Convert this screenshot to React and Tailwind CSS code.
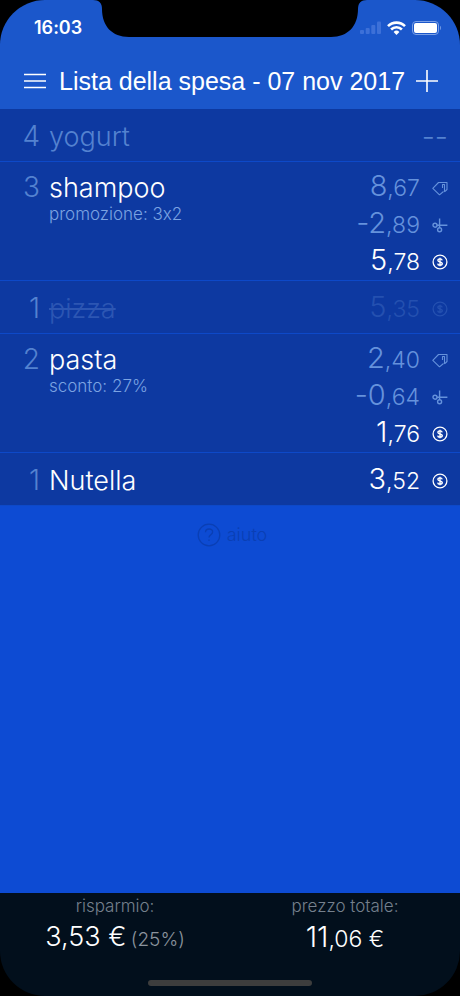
import React from 'react';
import clsx from 'clsx';

const items = [
  { id: 1, qty: 4, name: 'yogurt', status: 'pending', prices: [] },
  {
    id: 2,
    qty: 3,
    name: 'shampoo',
    note: 'promozione: 3x2',
    status: 'priced',
    prices: [
      { type: 'list', whole: '8', cents: '67' },
      { type: 'discount', whole: '-2', cents: '89' },
      { type: 'final', whole: '5', cents: '78' },
    ],
  },
  {
    id: 3,
    qty: 1,
    name: 'pizza',
    status: 'removed',
    prices: [{ type: 'final', whole: '5', cents: '35' }],
  },
  {
    id: 4,
    qty: 2,
    name: 'pasta',
    note: 'sconto: 27%',
    status: 'priced',
    prices: [
      { type: 'list', whole: '2', cents: '40' },
      { type: 'discount', whole: '-0', cents: '64' },
      { type: 'final', whole: '1', cents: '76' },
    ],
  },
  {
    id: 5,
    qty: 1,
    name: 'Nutella',
    status: 'priced',
    prices: [{ type: 'final', whole: '3', cents: '52' }],
  },
];

const TagIcon = () => (
  <svg width="16" height="16" viewBox="0 0 16 16" fill="none" stroke="currentColor" strokeWidth="1.1" strokeLinejoin="round">
    <path d="M11.500 11.500 7.500 14.800.8 8.300 6.500 2.500h8.500v7l-2.500 2.300" />
    <path d="M12.500 11.800V4.500H10.500v3.500" />
  </svg>
);

const ScissorsIcon = () => (
  <svg width="16" height="16" viewBox="0 0 16 16" fill="none" stroke="currentColor" strokeWidth="1.4">
    <circle cx="3" cy="8.2" r="2" />
    <circle cx="7.6" cy="12.8" r="2" />
    <path d="M5 8.2h10.4M7.6 10.8V1.4" />
  </svg>
);

const CoinIcon = () => (
  <svg width="16" height="16" viewBox="0 0 16 16" fill="none" stroke="currentColor" strokeWidth="1.3">
    <circle cx="8" cy="8" r="6.9" />
    <path
      d="M10.2 6.3C10 5.4 9.2 4.9 8 4.9s-2.1.6-2.1 1.5c0 2.1 4.4 1 4.4 3.2 0 1-.9 1.6-2.3 1.6-1.3 0-2.2-.6-2.3-1.6M8 3.7v8.6"
      strokeWidth="1.4"
    />
  </svg>
);

const priceIcons = {
  list: TagIcon,
  discount: ScissorsIcon,
  final: CoinIcon,
};

const Notch = () => (
  <svg className="absolute left-1/2 top-0 -translate-x-1/2" width="274" height="38" viewBox="0 0 274 38">
    <path d="M0 0C6 0 9 3 9 9C9 26 19 37 36 37H238C255 37 265 26 265 9C265 3 268 0 274 0Z" fill="#000" />
  </svg>
);

const StatusBar = () => (
  <div className="flex h-14 items-center justify-between pl-[34px] pr-[18px]">
    <span className="text-lg font-semibold">16:03</span>
    <div className="flex items-center gap-1.5">
      <svg width="21" height="14" viewBox="0 0 21 14" fill="#3d70d8">
        <rect x="0" y="9" width="4" height="4" rx="1" />
        <rect x="5.7" y="7" width="4" height="6" rx="1" />
        <rect x="11.3" y="4" width="4" height="9" rx="1" />
        <rect x="17" y="0.5" width="4" height="12.5" rx="1" />
      </svg>
      <svg width="19" height="14" viewBox="0 0 19 14" fill="none" stroke="#fff" strokeWidth="2.6">
        <path d="M1 5.2a12 12 0 0 1 17 0M4.1 8.5a7.6 7.6 0 0 1 10.8 0" />
        <path d="M9.5 14 6.6 11a4.1 4.1 0 0 1 5.8 0z" fill="#fff" stroke="none" />
      </svg>
      <svg width="30" height="14" viewBox="0 0 30 14">
        <rect x="0.5" y="0.5" width="26" height="13" rx="3.5" fill="none" stroke="#7ba0e6" />
        <rect x="2" y="2" width="23" height="10" rx="2" fill="#fff" />
        <path d="M28 4.8v4.4c1.3-.6 1.3-3.8 0-4.4z" fill="#7ba0e6" />
      </svg>
    </div>
  </div>
);

const Header = () => (
  <header className="relative h-[109px] rounded-t-[45px] bg-[#1b57cb] text-white">
    <Notch />
    <StatusBar />
    <div className="flex h-[50px] items-center px-[22px]">
      <button type="button" aria-label="Menu" className="flex w-[37px] shrink-0 items-center">
        <svg width="26" height="16" viewBox="0 0 26 16" stroke="currentColor" strokeWidth="1.6">
          <path d="M2 1.5h22M2 8h22M2 14.5h22" />
        </svg>
      </button>
      <h1 className="grow whitespace-nowrap font-['Liberation_Sans',sans-serif] text-[25px] leading-8">
        Lista della spesa - 07 nov 2017
      </h1>
      <button type="button" aria-label="Aggiungi" className="flex shrink-0 items-center">
        <svg width="22" height="22" viewBox="0 0 22 22" stroke="currentColor" strokeWidth="1.6">
          <path d="M0 11h22M11 0v22" />
        </svg>
      </button>
    </div>
  </header>
);

const Price = ({ price, removed }) => {
  const Icon = priceIcons[price.type];
  const isFinal = price.type === 'final';

  return (
    <div
      className={clsx(
        'flex h-[37px] items-center justify-end gap-3',
        removed ? 'text-[#2450b0]' : isFinal ? 'text-white' : 'text-[#6592dc]'
      )}
    >
      <span className="leading-[35px]">
        <span className="text-[29px]">{price.whole}</span>
        <span className="text-[23px]">,{price.cents}</span>
      </span>
      <Icon />
    </div>
  );
};

const ItemRow = ({ item }) => {
  const removed = item.status === 'removed';
  const pending = item.status === 'pending';

  return (
    <li
      className={clsx(
        'flex min-h-[53px] border-b border-[#0d49c8] bg-[#0d39a1] px-3',
        item.note ? 'pt-[7px]' : 'pt-[9px]'
      )}
    >
      <span className="h-[37px] w-7 text-right text-[28px] leading-[37px] text-[#5482d0]">{item.qty}</span>
      <div className="ml-[9px] grow">
        <p
          className={clsx(
            'text-[27px] leading-[37px]',
            removed && 'text-[#2c56b3] line-through decoration-2',
            pending && 'text-[#5482d0]',
            !removed && !pending && 'text-white'
          )}
        >
          {item.name}
        </p>
        {item.note && <p className="-mt-0.5 text-[17px] leading-5 text-[#7ba3e2]">{item.note}</p>}
      </div>
      <div>
        {item.prices.map(price => (
          <Price key={price.type} price={price} removed={removed} />
        ))}
        {pending && <span className="text-[29px] leading-[37px] text-[#5482d0]">--</span>}
      </div>
    </li>
  );
};

const Footer = () => (
  <footer className="flex h-[103px] flex-col justify-between rounded-b-[45px] bg-[#020f1c] pb-[10px] pt-px">
    <div className="grid grid-cols-2 text-center">
      <div>
        <p className="text-[17px] leading-6 text-[#75808d]">risparmio:</p>
        <p className="text-white">
          <span className="text-[27px] leading-[38px]">3,53 €</span>{' '}
          <span className="text-[19px] text-[#8a939d]">(25%)</span>
        </p>
      </div>
      <div>
        <p className="text-[17px] leading-6 text-[#75808d]">prezzo totale:</p>
        <p className="text-white">
          <span className="text-[29px] leading-[38px]">11</span>
          <span className="text-[23px]">,06 €</span>
        </p>
      </div>
    </div>
    <div className="mx-auto h-1.5 w-[164px] rounded-full bg-[#3d3d3d]" />
  </footer>
);

const App = () => {
  return (
    <div className="min-h-screen bg-black font-['Inter',sans-serif] font-[350] [font-variant-ligatures:no-contextual]">
      <div className="flex min-h-screen flex-col">
        <Header />
        <main className="grow bg-[#0d4bd3]">
          <ul>
            {items.map(item => (
              <ItemRow key={item.id} item={item} />
            ))}
          </ul>
          <button type="button" className="mx-auto mt-[17px] flex items-center gap-1.5 pl-1 text-lg leading-6 text-[#0a3fb4]">
            <svg width="24" height="24" viewBox="0 0 24 24" fill="none" stroke="currentColor" strokeWidth="1.3">
              <circle cx="12" cy="12" r="10.8" />
              <path d="M8.5 9.3c0-2 1.5-3.3 3.6-3.3s3.5 1.2 3.5 3c0 2.8-3.6 2.7-3.6 5.5M12 16.5v1.6" />
            </svg>
            aiuto
          </button>
        </main>
        <Footer />
      </div>
    </div>
  );
};

export default App;
